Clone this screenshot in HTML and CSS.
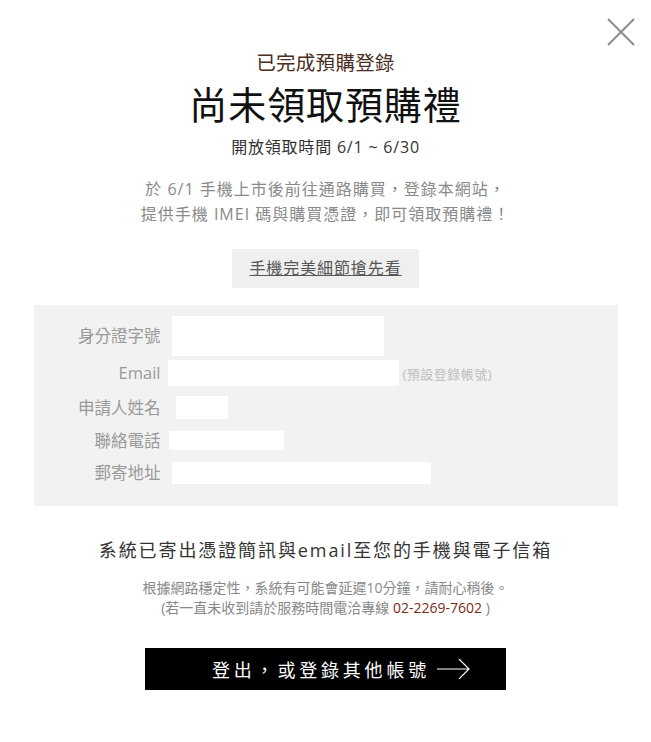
FILE: index.html
```html
<!DOCTYPE html>
<html lang="zh-Hant">
<head>
    <meta charset="UTF-8">
    <meta name="viewport" content="width=device-width, initial-scale=1.0">
    <title>已完成預購登錄</title>
    <link rel="stylesheet" href="styles.css">
</head>
<body>
    <div class="popup">
        <a class="close-btn" href="#" aria-label="關閉">
            <svg width="30" height="30" viewBox="0 0 30 30">
                <path d="M2 2 L28 28 M28 2 L2 28" stroke="#8c8c8c" stroke-width="2" fill="none"/>
            </svg>
        </a>

        <p class="sub-title">已完成預購登錄</p>
        <h1>尚未領取預購禮</h1>
        <p class="period">開放領取時間 6/1 ~ 6/30</p>

        <p class="intro">
            於 6/1 手機上市後前往通路購買，登錄本網站，<br>
            提供手機 IMEI 碼與購買憑證，即可領取預購禮！
        </p>

        <a class="detail-link" href="#">手機完美細節搶先看</a>

        <div class="form-box">
            <div class="form-row row-id">
                <span class="label">身分證字號</span>
                <span class="field"></span>
            </div>
            <div class="form-row row-email">
                <span class="label">Email</span>
                <span class="field"></span>
                <span class="hint">(預設登錄帳號)</span>
            </div>
            <div class="form-row row-name">
                <span class="label">申請人姓名</span>
                <span class="field"></span>
            </div>
            <div class="form-row row-phone">
                <span class="label">聯絡電話</span>
                <span class="field"></span>
            </div>
            <div class="form-row row-addr">
                <span class="label">郵寄地址</span>
                <span class="field"></span>
            </div>
        </div>

        <p class="sent">系統已寄出憑證簡訊與email至您的手機與電子信箱</p>
        <p class="note">
            根據網路穩定性，系統有可能會延遲10分鐘，請耐心稍後。<br>
            (若一直未收到請於服務時間電洽專線 <span class="tel">02-2269-7602</span> )
        </p>

        <a class="logout-btn" href="#">
            <span>登出，或登錄其他帳號</span>
            <svg width="34" height="20" viewBox="0 0 34 20">
                <path d="M0 10 H32 M22 0 L32 10 L22 20" stroke="#ffffff" stroke-width="1.2" fill="none"/>
            </svg>
        </a>
    </div>
</body>
</html>
```

FILE: styles.css
```css
body {
    margin: 0;
    background-color: #ffffff;
    font-family: "Open Sans", "Noto Sans CJK TC", sans-serif;
    color: #333;
}
.popup {
    width: 651px;
    min-height: 742px;
    box-sizing: border-box;
    padding-top: 49px;
    display: flex;
    flex-direction: column;
    align-items: center;
    text-align: center;
    position: relative;
}
p {
    margin: 0;
}
.close-btn {
    position: absolute;
    top: 17px;
    right: 15px;
    display: block;
    width: 30px;
    height: 30px;
}
.sub-title {
    font-size: 19.5px;
    line-height: 28px;
    letter-spacing: 0.3px;
    color: #4a2e22;
}
h1 {
    margin: 2px 0 0;
    font-size: 38px;
    line-height: 50px;
    letter-spacing: 0.9px;
    font-weight: normal;
    color: #111;
}
.period {
    margin-top: 6px;
    font-size: 16px;
    line-height: 24px;
    letter-spacing: 0.8px;
    color: #333;
}
.intro {
    margin-top: 18px;
    font-size: 16px;
    line-height: 25px;
    letter-spacing: 1px;
    color: #8a8a8a;
}
.detail-link {
    margin-top: 22px;
    width: 187px;
    height: 39px;
    line-height: 39px;
    background-color: #efefef;
    font-size: 16px;
    letter-spacing: 0.9px;
    color: #555;
    text-decoration: underline;
}
.form-box {
    margin-top: 17px;
    width: 584px;
    box-sizing: border-box;
    padding: 11px 0 21px;
    background-color: #f2f2f2;
    display: flex;
    flex-direction: column;
}
.form-row {
    display: flex;
    align-items: center;
}
.label {
    width: 127px;
    text-align: right;
    font-size: 16.5px;
    line-height: 24px;
    color: #999;
}
.field {
    display: block;
    background-color: #ffffff;
}
.row-id .field {
    margin-left: 11px;
    width: 212px;
    height: 40px;
}
.row-email {
    margin-top: 4px;
}
.row-email .field {
    margin-left: 7px;
    width: 231px;
    height: 26px;
}
.hint {
    margin-left: 4px;
    font-size: 13px;
    letter-spacing: 0.5px;
    color: #bdbdbd;
}
.row-name {
    margin-top: 9.5px;
}
.row-name .field {
    margin-left: 15px;
    width: 52px;
    height: 23px;
}
.row-phone {
    margin-top: 9px;
}
.row-phone .field {
    margin-left: 8px;
    width: 115px;
    height: 19px;
}
.row-addr {
    margin-top: 8.5px;
}
.row-addr .field {
    margin-left: 11px;
    width: 259px;
    height: 22px;
}
.sent {
    margin-top: 30px;
    font-size: 18px;
    line-height: 28px;
    letter-spacing: 1.9px;
    color: #333;
}
.note {
    margin-top: 14px;
    font-size: 14px;
    line-height: 20px;
    color: #888;
}
.tel {
    color: #7a2a1c;
}
.logout-btn {
    margin-top: 30px;
    width: 361px;
    height: 42px;
    background-color: #000;
    color: #fff;
    text-decoration: none;
    display: flex;
    align-items: center;
    justify-content: flex-start;
    gap: 7px;
    font-size: 18px;
    letter-spacing: 3.8px;
    padding-left: 67px;
    box-sizing: border-box;
}
.logout-btn svg {
    display: block;
}
```
